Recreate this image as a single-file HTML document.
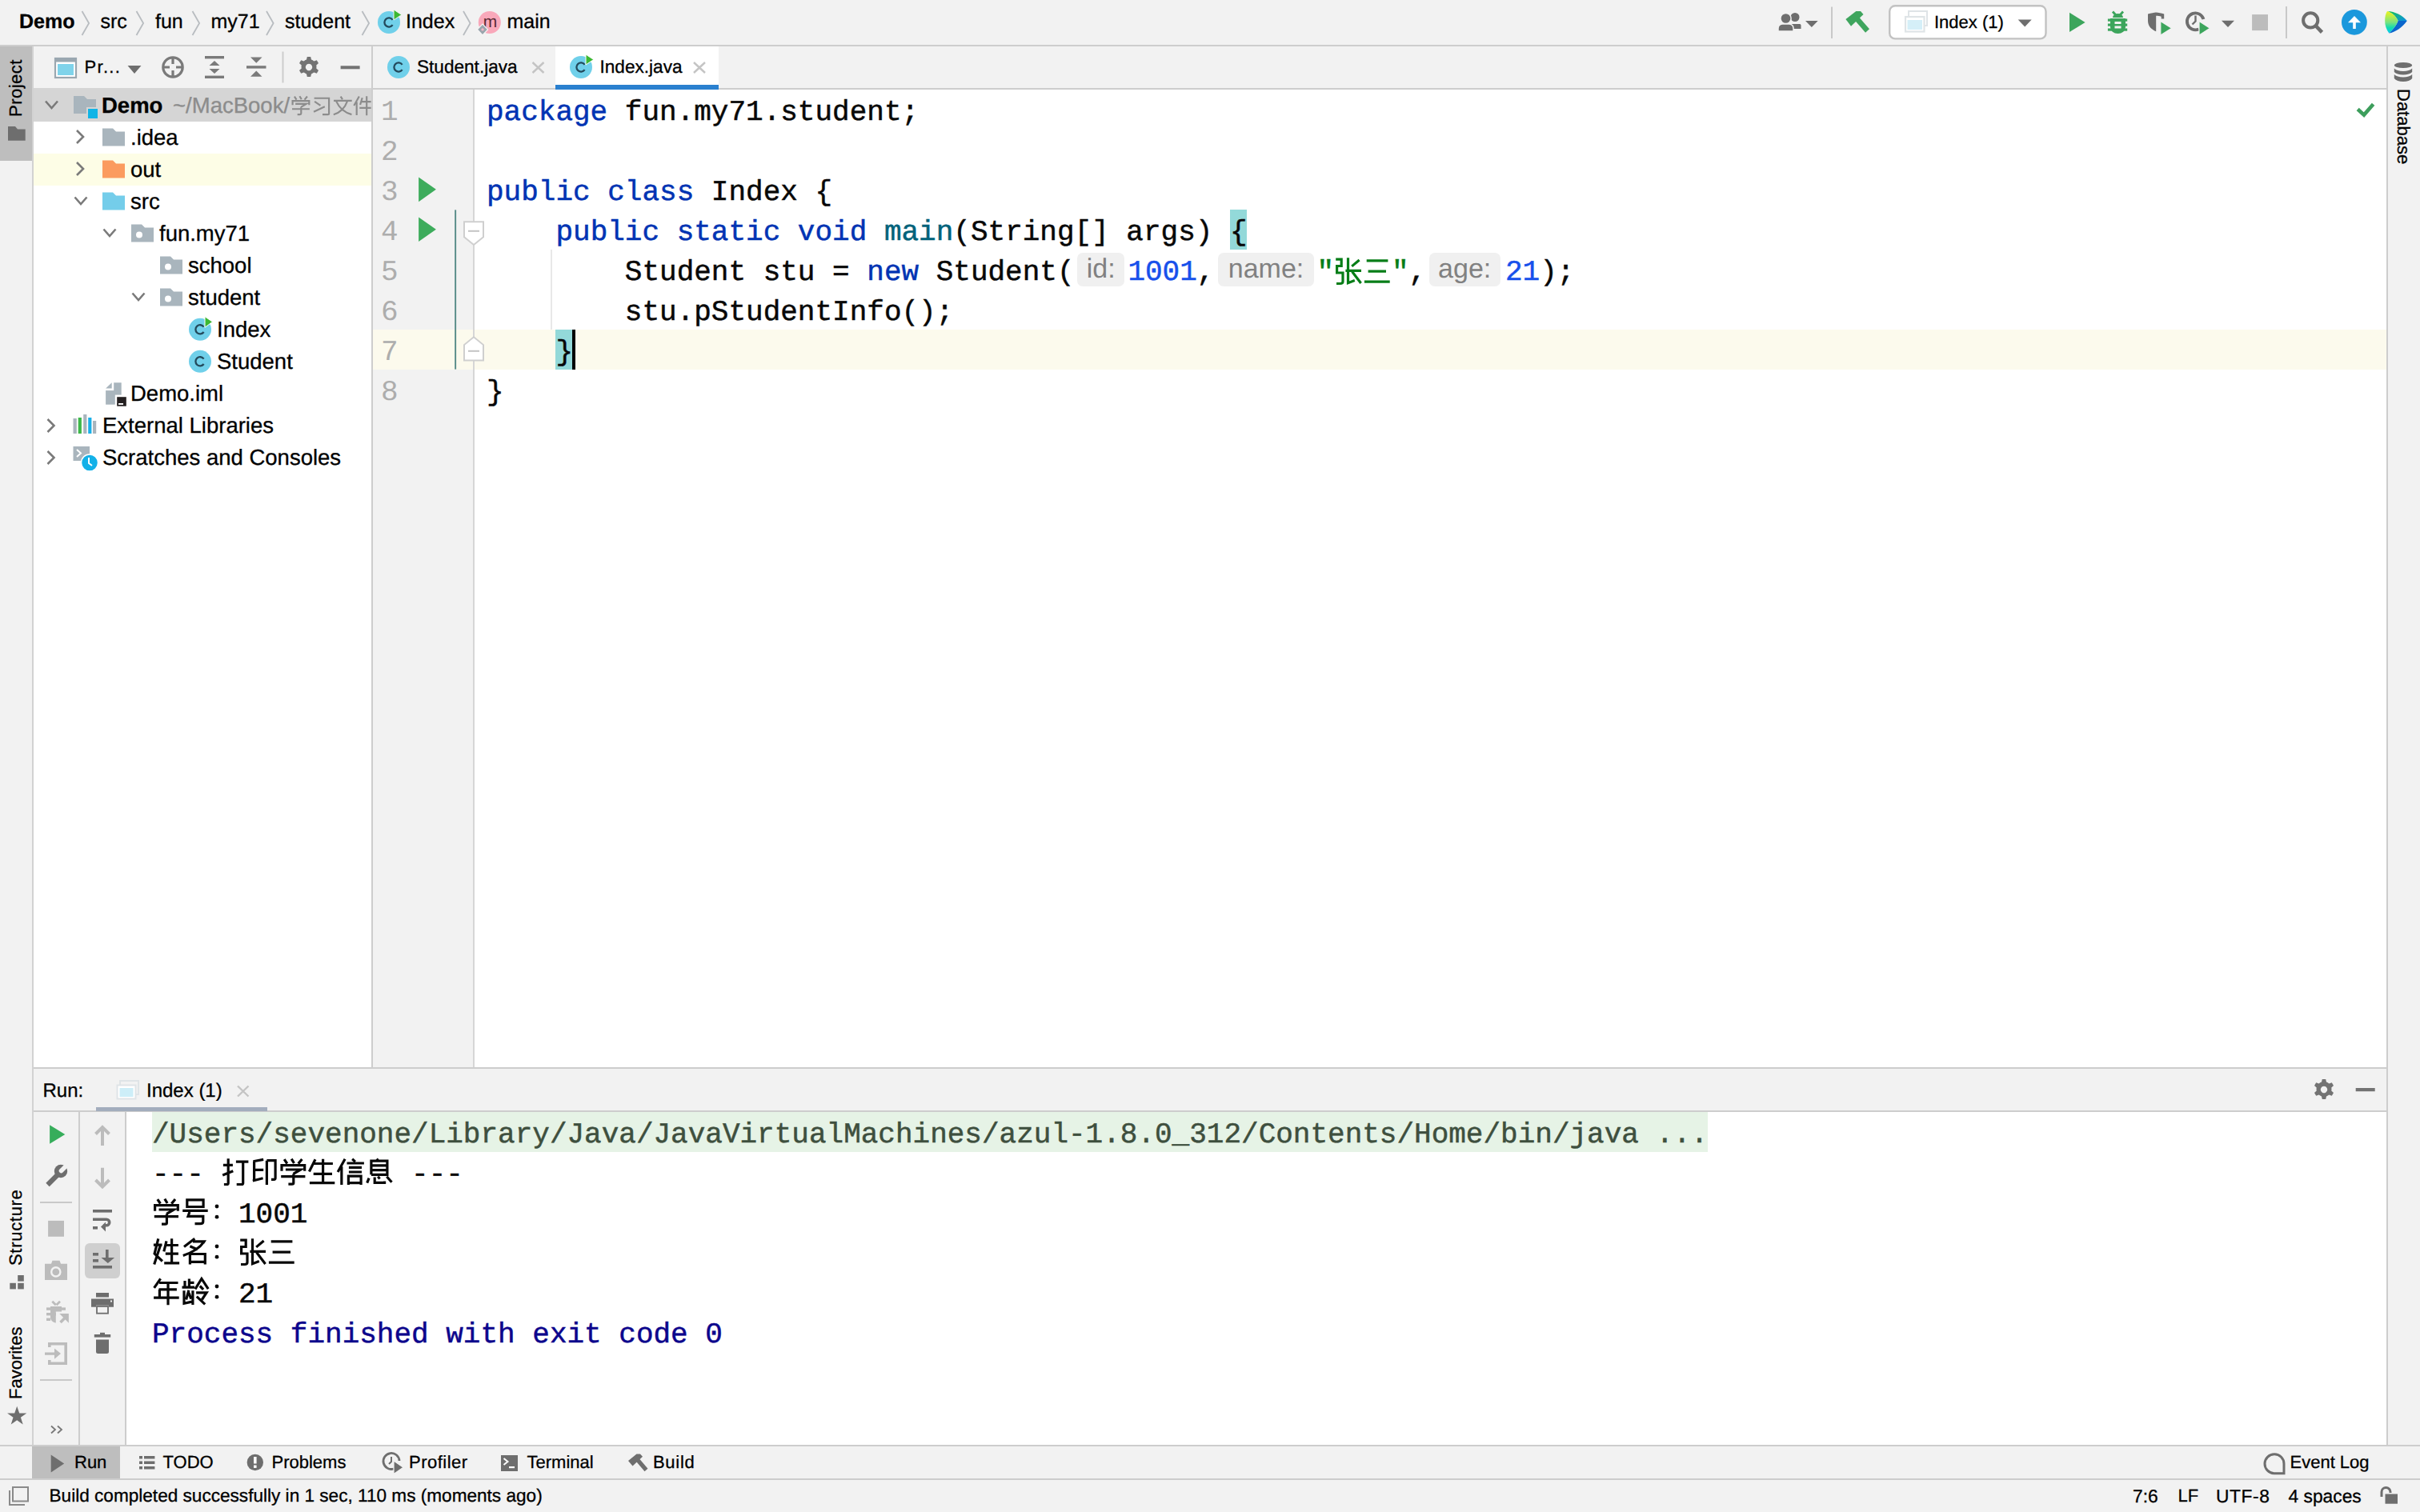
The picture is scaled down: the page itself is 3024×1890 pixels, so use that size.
<!DOCTYPE html>
<html><head><meta charset="utf-8">
<style>
*{margin:0;padding:0;box-sizing:border-box}
html,body{text-rendering:geometricPrecision;width:3024px;height:1890px;overflow:hidden;background:#f2f2f2;font-family:"Liberation Sans",sans-serif;color:#000}
.a{position:absolute}
.hb{position:absolute;background:#cdcdcd}
.t26{font-size:26px;line-height:40px;white-space:pre}
.t22{font-size:22px;line-height:40px;white-space:pre}
.mono{font-family:"Liberation Mono",monospace;font-size:36px;line-height:50px;white-space:pre;color:#080808;-webkit-text-stroke:0.5px currentColor}
.tr{font-size:27.5px;line-height:40px;white-space:pre;-webkit-text-stroke:0.3px currentColor}
.bc{font-size:25px;line-height:56px;white-space:pre;-webkit-text-stroke:0.3px currentColor}
.s22{font-size:22px;line-height:40px;white-space:pre;-webkit-text-stroke:0.3px currentColor}
.kw{color:#0033b3}.num{color:#1750eb}
.ln{font-family:"Liberation Mono",monospace;font-size:36px;line-height:50px;color:#adadad;white-space:pre}
.hint{height:41.2px;border-radius:7px;background:#f0f0f0;color:#818181;font-size:34px;line-height:41px;text-align:center;white-space:pre}
.cjk{display:inline-block;width:36px;text-align:center}
.vt{font-size:22px;line-height:22px;white-space:pre;transform-origin:0 0;-webkit-text-stroke:0.3px currentColor}
svg{position:absolute;overflow:visible}
</style></head><body>

<!-- ============ TOP NAV BAR ============ -->
<div class="a" id="topbar" style="left:0;top:0;width:3024px;height:56px;background:#f2f2f2"></div>
<div class="hb" style="left:0;top:56px;width:3024px;height:2px"></div>

<!-- ============ LEFT STRIPE ============ -->
<div class="a" style="left:0;top:58px;width:40px;height:143px;background:#bebebe"></div>
<div class="hb" style="left:40px;top:58px;width:2px;height:1748px;background:#d2d2d2"></div>

<!-- ============ PROJECT PANEL ============ -->
<div class="a" style="left:42px;top:110px;width:422px;height:1224px;background:#fff"></div>
<div class="hb" style="left:464px;top:58px;width:2px;height:1276px"></div>


<!-- TREE ROWS -->
<div class="a" style="left:42px;top:110px;width:422px;height:42px;background:#d5d5d5"></div>
<div class="a" style="left:42px;top:192px;width:422px;height:40px;background:#fdfde6"></div>
<div class="a" style="left:42px;top:110px;width:422px;height:520px;overflow:hidden">
 <div class="a tr" style="left:85px;top:2px;font-weight:bold">Demo<span style="font-weight:normal;color:#8c8c8c;margin-left:5px"> ~/MacBook/</span></div>
 <div class="a tr" style="left:121px;top:42px">.idea</div>
 <div class="a tr" style="left:121px;top:82px">out</div>
 <div class="a tr" style="left:121px;top:122px">src</div>
 <div class="a tr" style="left:157px;top:162px">fun.my71</div>
 <div class="a tr" style="left:193px;top:202px">school</div>
 <div class="a tr" style="left:193px;top:242px">student</div>
 <div class="a tr" style="left:229px;top:282px">Index</div>
 <div class="a tr" style="left:229px;top:322px">Student</div>
 <div class="a tr" style="left:121px;top:362px">Demo.iml</div>
 <div class="a tr" style="left:86px;top:402px">External Libraries</div>
 <div class="a tr" style="left:86px;top:442px">Scratches and Consoles</div>
</div>

<!-- ============ EDITOR ============ -->
<div class="hb" style="left:466px;top:110px;width:2516px;height:2px"></div>
<div class="a" style="left:466px;top:112px;width:125px;height:1222px;background:#f2f2f2"></div>
<div class="hb" style="left:591px;top:112px;width:2px;height:1222px;background:#d6d6d6"></div>
<div class="a" style="left:593px;top:112px;width:2389px;height:1222px;background:#fff"></div>


<!-- BREADCRUMBS -->
<div class="a bc" style="left:24px;top:-1px;font-weight:bold">Demo</div>
<div class="a bc" style="left:125.5px;top:-1px">src</div>
<div class="a bc" style="left:194px;top:-1px">fun</div>
<div class="a bc" style="left:263.5px;top:-1px">my71</div>
<div class="a bc" style="left:356px;top:-1px">student</div>
<div class="a bc" style="left:507px;top:-1px">Index</div>
<div class="a bc" style="left:633.5px;top:-1px">main</div>

<!-- PROJECT TOOLBAR -->
<div class="a s22" style="left:105.5px;top:64px;letter-spacing:1.3px">Pr...</div>

<!-- TABS -->
<div class="a" style="left:694px;top:58px;width:204px;height:52px;background:#fff"></div>
<div class="a" style="left:694px;top:106px;width:204px;height:6px;background:#2a80cf"></div>
<div class="a s22" style="left:521px;top:64px;font-size:22.6px">Student.java</div>
<div class="a s22" style="left:749.5px;top:64px;font-size:22.6px">Index.java</div>


<!-- CURRENT LINE (7) -->
<div class="a" style="left:466px;top:412px;width:2516px;height:50px;background:#fcfaed"></div>
<div class="hb" style="left:591px;top:412px;width:2px;height:50px;background:#d6d6d6"></div>
<!-- brace highlights -->
<div class="a" style="left:1536.5px;top:262px;width:21.6px;height:50px;background:#93d9d9"></div>
<div class="a" style="left:693.5px;top:412px;width:21.6px;height:50px;background:#93d9d9"></div>
<div class="a" style="left:714.5px;top:412px;width:4px;height:50px;background:#000"></div>
<!-- indent guide -->
<div class="a" style="left:688px;top:312px;width:2px;height:100px;background:#e8e8e8"></div>
<!-- LINE NUMBERS -->
<div class="a ln" style="left:476px;top:115.5px">1<br>2<br>3<br>4<br>5<br>6<br>7<br>8</div>
<!-- CODE -->
<div class="a mono" style="left:608px;top:115.5px"><span class="kw">package</span> fun.my71.student;</div>
<div class="a mono" style="left:608px;top:215.5px"><span class="kw">public class</span> Index {</div>
<div class="a mono" style="left:608px;top:265.5px">    <span class="kw">public static void</span> <span style="color:#00627a">main</span>(String[] args) {</div>
<div class="a mono" style="left:608px;top:315.5px">        Student stu = <span class="kw">new</span> Student(</div>
<div class="a hint" style="left:1346.4px;top:316.4px;width:58.6px">id:</div>
<div class="a mono" style="left:1409.4px;top:315.5px"><span class="num">1001</span>,</div>
<div class="a hint" style="left:1522.2px;top:316.4px;width:119.6px">name:</div>
<div class="a mono" style="left:1645.4px;top:315.5px;color:#067d17">"<span class="cjk"> </span><span class="cjk"> </span>"<span style="color:#080808">,</span></div>
<div class="a hint" style="left:1785.6px;top:316.4px;width:89.2px">age:</div>
<div class="a mono" style="left:1881px;top:315.5px"><span class="num">21</span>);</div>
<div class="a mono" style="left:608px;top:365.5px">        stu.pStudentInfo();</div>
<div class="a mono" style="left:608px;top:415.5px">    }</div>
<div class="a mono" style="left:608px;top:465.5px">}</div>

<!-- ============ RIGHT STRIPE ============ -->
<div class="hb" style="left:2982px;top:58px;width:2px;height:1748px"></div>

<!-- ============ RUN WINDOW ============ -->
<div class="hb" style="left:42px;top:1334px;width:2940px;height:2px"></div>
<div class="hb" style="left:42px;top:1388px;width:2940px;height:2px"></div>
<div class="hb" style="left:98px;top:1390px;width:2px;height:416px"></div>
<div class="hb" style="left:156px;top:1390px;width:2px;height:416px"></div>
<div class="a" style="left:158px;top:1390px;width:2824px;height:416px;background:#fff"></div>


<!-- RUN HEADER -->
<div class="a s22" style="left:53.5px;top:1343.7px;font-size:24px">Run:</div>
<div class="a s22" style="left:183px;top:1343.7px;font-size:24px">Index (1)</div>
<div class="a" style="left:120px;top:1384px;width:214px;height:5px;background:#a3adbd"></div>
<!-- CONSOLE -->
<div class="a" style="left:190px;top:1390px;width:1944px;height:50px;background:#e6f3e6"></div>
<div class="a mono" style="left:190px;top:1393.5px;color:#3e4f3e">/Users/sevenone/Library/Java/JavaVirtualMachines/azul-1.8.0_312/Contents/Home/bin/java ...</div>
<div class="a mono" style="left:190px;top:1443.5px">--- <span class="cjk"> </span><span class="cjk"> </span><span class="cjk"> </span><span class="cjk"> </span><span class="cjk"> </span><span class="cjk"> </span> ---</div>
<div class="a mono" style="left:190px;top:1493.5px"><span class="cjk"> </span><span class="cjk"> </span><span class="cjk"> </span>1001</div>
<div class="a mono" style="left:190px;top:1543.5px"><span class="cjk"> </span><span class="cjk"> </span><span class="cjk"> </span><span class="cjk"> </span><span class="cjk"> </span></div>
<div class="a mono" style="left:190px;top:1593.5px"><span class="cjk"> </span><span class="cjk"> </span><span class="cjk"> </span>21</div>
<div class="a mono" style="left:190px;top:1643.5px;color:#0c058c">Process finished with exit code 0</div>
<div class="a" style="left:106px;top:1554px;width:44px;height:44px;border-radius:6px;background:#cfcfcf"></div>
<!-- BOTTOM STRIPE -->
<div class="a" style="left:40px;top:1808px;width:110px;height:40px;background:#bebebe"></div>
<div class="a s22" style="left:93px;top:1808px">Run</div>
<div class="a s22" style="left:203.5px;top:1808px">TODO</div>
<div class="a s22" style="left:339.5px;top:1808px">Problems</div>
<div class="a s22" style="left:511px;top:1808px;letter-spacing:0.5px">Profiler</div>
<div class="a s22" style="left:658.5px;top:1808px">Terminal</div>
<div class="a s22" style="left:816px;top:1808px;letter-spacing:0.7px">Build</div>
<div class="a s22" style="left:2861.5px;top:1808px">Event Log</div>
<!-- STATUS BAR -->
<div class="a s22" style="left:61.5px;top:1850px;font-size:22.6px">Build completed successfully in 1 sec, 110 ms (moments ago)</div>
<div class="a s22" style="left:2665px;top:1850px;font-size:22.8px">7:6</div>
<div class="a s22" style="left:2721.5px;top:1850px">LF</div>
<div class="a s22" style="left:2769px;top:1850px;font-size:22.8px;letter-spacing:0.6px">UTF-8</div>
<div class="a s22" style="left:2859.5px;top:1850px;font-size:22.8px">4 spaces</div>

<!-- ============ BOTTOM STRIPE + STATUS ============ -->
<div class="hb" style="left:0;top:1806px;width:3024px;height:2px"></div>
<div class="hb" style="left:0;top:1848px;width:3024px;height:2px"></div>

<svg id="ov" style="left:0;top:0" width="3024" height="1890">
<polyline points="57,126.5 64.5,135 72,126.5" fill="none" stroke="#7a7a7a" stroke-width="2.6"/>
<path d="M92,120h13l4,4h11v18h-28z" fill="#a9b5bd"/>
<rect x="109" y="135" width="14" height="14" fill="#10b4e6" stroke="#d5d5d5" stroke-width="2"/>
<polyline points="96,163 104,171 96,179" fill="none" stroke="#7a7a7a" stroke-width="2.6"/>
<path d="M128,160.5h13l4,4h11v18h-28z" fill="#a9b5bd"/>
<polyline points="96,203 104,211 96,219" fill="none" stroke="#7a7a7a" stroke-width="2.6"/>
<path d="M128,200.5h13l4,4h11v18h-28z" fill="#fb9b5f"/>
<polyline points="93.5,246.5 101.0,255 108.5,246.5" fill="none" stroke="#7a7a7a" stroke-width="2.6"/>
<path d="M128,240.5h13l4,4h11v18h-28z" fill="#74cdea"/>
<polyline points="129.5,286.5 137.0,295 144.5,286.5" fill="none" stroke="#7a7a7a" stroke-width="2.6"/>
<path d="M164,280.5h13l4,4h11v18h-28z" fill="#a9b5bd"/><circle cx="174" cy="293.5" r="4" fill="#fff"/>
<path d="M200,320.5h13l4,4h11v18h-28z" fill="#a9b5bd"/><circle cx="210" cy="333.5" r="4" fill="#fff"/>
<polyline points="165.5,366.5 173.0,375 180.5,366.5" fill="none" stroke="#7a7a7a" stroke-width="2.6"/>
<path d="M200,360.5h13l4,4h11v18h-28z" fill="#a9b5bd"/><circle cx="210" cy="373.5" r="4" fill="#fff"/>
<circle cx="250" cy="411.8" r="14" fill="#70d0ea"/><path d="M254.6,408.6 A5.6,5.6 0 1 0 254.6,415.0" fill="none" stroke="#234a5c" stroke-width="2.3"/><path d="M256,395.8 L265.6,402.3 L256,409.3z" fill="#3cb832" stroke="#fff" stroke-width="1"/>
<circle cx="250" cy="451.8" r="14" fill="#70d0ea"/><path d="M254.6,448.6 A5.6,5.6 0 1 0 254.6,455.0" fill="none" stroke="#234a5c" stroke-width="2.3"/>
<g fill="#a9b5bd"><path d="M132.1,485.6l7.6,-7.3v7.3z"/><rect x="142.2" y="478.3" width="9.5" height="15.3"/><rect x="132.1" y="488.1" width="11.7" height="17.6"/></g><rect x="146.2" y="496.2" width="11.6" height="11.5" fill="#231f20"/><rect x="148" y="504" width="6" height="1.9" fill="#fff"/>
<polyline points="59.5,524 67.5,532 59.5,540" fill="none" stroke="#7a7a7a" stroke-width="2.6"/>
<rect x="91.5" y="523" width="4.3" height="19" fill="#a9b5bd"/><rect x="97.7" y="522" width="4.2" height="20" fill="#3db84a"/><rect x="104.2" y="518" width="4.2" height="24" fill="#a9b5bd"/><rect x="110.2" y="522" width="4.2" height="20" fill="#1ab0e8"/><rect x="116" y="526" width="4.2" height="16" fill="#a9b5bd"/>
<polyline points="59.5,564 67.5,572 59.5,580" fill="none" stroke="#7a7a7a" stroke-width="2.6"/>
<rect x="91.5" y="558" width="20.5" height="18" fill="#a9b5bd"/><polyline points="96,562 101,566.5 96,571" fill="none" stroke="#fff" stroke-width="2"/><circle cx="112" cy="578.5" r="10.5" fill="#13b1e8" stroke="#fff" stroke-width="1.5"/><polyline points="111,572 111,579 115,582" fill="none" stroke="#fff" stroke-width="2"/>
<polyline points="102.5,14 111.1,29 102.5,44" fill="none" stroke="#b8bcc0" stroke-width="1.8"/>
<polyline points="170.5,14 179.1,29 170.5,44" fill="none" stroke="#b8bcc0" stroke-width="1.8"/>
<polyline points="240.5,14 249.1,29 240.5,44" fill="none" stroke="#b8bcc0" stroke-width="1.8"/>
<polyline points="333,14 341.6,29 333,44" fill="none" stroke="#b8bcc0" stroke-width="1.8"/>
<polyline points="452.5,14 461.1,29 452.5,44" fill="none" stroke="#b8bcc0" stroke-width="1.8"/>
<polyline points="579,14 587.6,29 579,44" fill="none" stroke="#b8bcc0" stroke-width="1.8"/>
<circle cx="486" cy="28" r="14" fill="#70d0ea"/><path d="M490.6,24.8 A5.6,5.6 0 1 0 490.6,31.2" fill="none" stroke="#234a5c" stroke-width="2.3"/><path d="M492,12 L501.8,18.5 L492,25z" fill="#3cb832" stroke="#f2f2f2" stroke-width="1"/>
<circle cx="611.8" cy="28" r="14" fill="#f9a8ba"/><text x="612.5" y="33.8" font-family="Liberation Sans" font-size="21" text-anchor="middle" fill="#5a2a35">m</text><path d="M603,30l6.6,6.9l-6.6,6.9l-6.6,-6.9z" fill="#9aa5ad" stroke="#f7f7f7" stroke-width="1.2"/><circle cx="603" cy="36.9" r="1.7" fill="#f5b5c5"/>
<rect x="69" y="73" width="26" height="24" fill="#fff" stroke="#9aa7b0" stroke-width="2.2"/><rect x="68" y="72" width="28" height="5.5" fill="#9aa7b0"/><rect x="72" y="80" width="20" height="14" fill="#7fd3ea"/>
<path d="M159.5,82h17l-8.5,10z" fill="#6e6e6e"/>
<circle cx="216" cy="84" r="12.2" fill="none" stroke="#7a7a7a" stroke-width="3.2"/><path d="M216,72v8M216,88v8M204,84h8M220,84h8" stroke="#7a7a7a" stroke-width="3.2"/>
<rect x="256" y="70" width="24" height="3.4" fill="#7a7a7a"/><rect x="256" y="94.6" width="24" height="3.4" fill="#7a7a7a"/><path d="M261.5,82h13l-6.5,-6z M261.5,86h13l-6.5,6z" fill="#7a7a7a"/>
<rect x="308" y="82.2" width="24.5" height="3.4" fill="#7a7a7a"/><path d="M313,71.6h14.5l-7.25,7.2z M313,95.8h14.5l-7.25,-7.2z" fill="#7a7a7a"/>
<rect x="352.5" y="64.5" width="2" height="39" fill="#cdcdcd"/>
<g transform="translate(386,84) scale(1.0)"><path d="M-2.2,-13h4.4l0.8,3.6a10,10 0 0 1 3.3,1.9l3.5,-1.2l2.2,3.8l-2.7,2.5a10,10 0 0 1 0,3.8l2.7,2.5l-2.2,3.8l-3.5,-1.2a10,10 0 0 1 -3.3,1.9l-0.8,3.6h-4.4l-0.8,-3.6a10,10 0 0 1 -3.3,-1.9l-3.5,1.2l-2.2,-3.8l2.7,-2.5a10,10 0 0 1 0,-3.8l-2.7,-2.5l2.2,-3.8l3.5,1.2a10,10 0 0 1 3.3,-1.9z M0,-4.2a4.2,4.2 0 1 0 0.01,0z" fill="#737373" fill-rule="evenodd"/></g>
<rect x="425.6" y="82.3" width="24" height="4" fill="#737373"/>
<circle cx="498" cy="84" r="14" fill="#70d0ea"/><path d="M502.6,80.8 A5.6,5.6 0 1 0 502.6,87.2" fill="none" stroke="#234a5c" stroke-width="2.3"/>
<path d="M665.5,78l14,13M679.5,78l-14,13" stroke="#c4c4c4" stroke-width="2.4"/>
<circle cx="726" cy="84" r="14" fill="#70d0ea"/><path d="M730.6,80.8 A5.6,5.6 0 1 0 730.6,87.2" fill="none" stroke="#234a5c" stroke-width="2.3"/><path d="M732,68 L741.8,74.5 L732,81z" fill="#3cb832" stroke="#fff" stroke-width="1"/>
<path d="M867,78l14,13M881,78l-14,13" stroke="#c4c4c4" stroke-width="2.4"/>
<g fill="#6e6e6e"><circle cx="2243" cy="21.5" r="5.5"/><path d="M2236,30h13c1,0 1.5,1 1.5,2v4h-14.5z"/><circle cx="2231.5" cy="23" r="6.6" stroke="#f2f2f2" stroke-width="1.5"/><path d="M2222,39v-3.5c0,-3 2,-5 5,-5.5h9c3,0.5 5,2.5 5,5.5v3.5z" stroke="#f2f2f2" stroke-width="1.5"/></g>
<path d="M2256,26h15.7l-7.85,8z" fill="#6e6e6e"/>
<rect x="2288" y="8.5" width="2" height="39.5" fill="#c9c9c9"/>
<path d="M2320,23l13.5,15.5" stroke="#3fa55e" stroke-width="6.5"/><path d="M2306.4,24.1l12.9,-10l5.7,0l3.5,4l-15.5,14.7z" fill="#3fa55e"/>
<rect x="2361.2" y="7.2" width="195.3" height="41.2" rx="7" fill="#fff" stroke="#c2c2c2" stroke-width="2.4"/>
<rect x="2385" y="14" width="23" height="18" fill="none" stroke="#dfe4e7" stroke-width="2"/><rect x="2381" y="21" width="23.5" height="18.5" fill="#fff" stroke="#dfe4e7" stroke-width="2.2"/><rect x="2383.5" y="25" width="18.5" height="12" fill="#d5eff8"/>
<path d="M2521.7,24.5h17l-8.5,9z" fill="#6e6e6e"/>
<path d="M2586,15.8v24.3l19.6,-12.15z" fill="#3ca55c"/>
<g fill="#3ca55c"><path d="M2640,22a6.5,5 0 0 1 13,0z"/><path d="M2637,23h19v11a9.5,8 0 0 1 -19,0z"/><rect x="2633.9" y="23.5" width="24.3" height="3.2"/><rect x="2633.9" y="29.5" width="24.3" height="3.2"/><rect x="2633.9" y="35.5" width="24.3" height="3.2"/><path d="M2640,14.5l4,4.5M2653,14.5l-4,4.5" stroke="#3ca55c" stroke-width="2.8"/></g><rect x="2642.5" y="27" width="8" height="3" fill="#f2f2f2"/><rect x="2642.5" y="32.5" width="8" height="3" fill="#f2f2f2"/>
<path d="M2684,17.5c4,-1 8,-2 10,-2c3,0 7,1 10.2,2v6h-3.5v-2.8c-2,-0.6 -4,-0.9 -6.5,-0.9v19.5c-5,-2 -10,-6 -10.2,-13z" fill="#6e6e6e"/><path d="M2699.8,26.6v17.3l13.9,-8.65z" fill="#3ca55c" stroke="#f2f2f2" stroke-width="1.2"/>
<path d="M2753.5,24a10.5,10.5 0 1 0 -6,12.5" fill="none" stroke="#6e6e6e" stroke-width="3.8"/><path d="M2743.5,19.5v7l-4,4" fill="none" stroke="#6e6e6e" stroke-width="2.4"/><path d="M2748,26.6v17.3l13.5,-8.65z" fill="#3ca55c" stroke="#f2f2f2" stroke-width="1.2"/>
<path d="M2776,25.8h16l-8,8.1z" fill="#6e6e6e"/>
<rect x="2814.1" y="18.1" width="19.9" height="20" fill="#bcbcbc"/>
<rect x="2856" y="8" width="2" height="40" fill="#c9c9c9"/>
<circle cx="2887.2" cy="25.4" r="9.1" fill="none" stroke="#6e6e6e" stroke-width="4"/><path d="M2894,32.5l7.5,7.8" stroke="#6e6e6e" stroke-width="4.6"/>
<circle cx="2941.9" cy="27.8" r="15.9" fill="#1b98dc"/><path d="M2934,28.2h16l-8,-8.2z" fill="#fff"/><rect x="2940.2" y="27.5" width="3.6" height="8.5" fill="#fff"/>
<defs><linearGradient id="jb1" x1="0" y1="0" x2="0" y2="1"><stop offset="0" stop-color="#eef51c"/><stop offset="0.5" stop-color="#7ae27e"/><stop offset="0.75" stop-color="#10dcb0"/><stop offset="1" stop-color="#07c8f0"/></linearGradient><linearGradient id="jb2" x1="0" y1="0" x2="1" y2="1"><stop offset="0" stop-color="#18c84a"/><stop offset="1" stop-color="#0a8ee6"/></linearGradient></defs>
<path d="M2983,14C2993,14.5 3002,19 3007.8,26H2996.5C2994,20 2989,16 2983,14Z" fill="url(#jb2)"/><path d="M3007.8,26C3002,34 2993,40.5 2985.3,41.6C2990,37 2995,31 2996.5,26Z" fill="#0b66cc"/><path d="M2983,14C2989,16 2994,20 2996.5,26C2995,31 2990,37 2985.3,41.6C2982,37 2980,31 2980.2,26C2980.2,21 2981,17 2983,14Z" fill="url(#jb1)"/>
<path d="M10,158h9l3,3.5h9.7v14.3h-21.7z" fill="#6e6e6e"/>
<rect x="22.2" y="1594" width="7.6" height="7.6" fill="#6e6e6e"/><rect x="12.3" y="1603.8" width="7.6" height="7.6" fill="#6e6e6e"/><rect x="22.2" y="1603.8" width="7.6" height="7.6" fill="#6e6e6e"/>
<path d="M21.2,1757.8l3,8.6h9.1l-7.4,5.4l2.8,8.8l-7.5,-5.4l-7.5,5.4l2.8,-8.8l-7.4,-5.4h9.1z" fill="#6e6e6e"/>
<g fill="#6e6e6e"><ellipse cx="3003" cy="81.5" rx="11.2" ry="3.6"/><path d="M2991.8,85.5c2,2.2 6,3.4 11.2,3.4s9.2,-1.2 11.2,-3.4v4.5c-2,2.2 -6,3.4 -11.2,3.4s-9.2,-1.2 -11.2,-3.4z"/><path d="M2991.8,93c2,2.2 6,3.4 11.2,3.4s9.2,-1.2 11.2,-3.4v5c-2,2.4 -6,4 -11.2,4s-9.2,-1.6 -11.2,-4z"/></g>
<path d="M523.1,221.5v30.7l21.8,-15.35z" fill="#3dac5c"/><path d="M523.1,271.5v30.6l21.8,-15.3z" fill="#3dac5c"/>
<rect x="568.2" y="262.4" width="1.9" height="199.2" fill="#558a87"/>
<path d="M580,277.2h24v19l-12,9.8l-12,-9.8z" fill="#fff" stroke="#cfcfcf" stroke-width="2"/><rect x="585" y="287.8" width="14" height="2" fill="#c4c4c4"/>
<path d="M580,450.5h24v-19.4l-12,-9.8l-12,9.8z" fill="#fff" stroke="#cfcfcf" stroke-width="2"/><rect x="585" y="437.8" width="14" height="2" fill="#c4c4c4"/>
<polyline points="2946.2,136.5 2954,143.6 2965.6,130.3" fill="none" stroke="#3d9e5c" stroke-width="4.6"/>
<rect x="150" y="1351" width="23" height="17" fill="none" stroke="#dfe4e7" stroke-width="2"/><rect x="146.5" y="1356.5" width="23" height="17" fill="#fff" stroke="#dfe4e7" stroke-width="2"/><rect x="149.5" y="1360" width="17" height="11" fill="#cdeef8"/>
<path d="M297,1357.5l13.5,13M310.5,1357.5l-13.5,13" stroke="#c4c4c4" stroke-width="2.4"/>

<g transform="translate(2904,1362)"><path d="M-2.2,-13h4.4l0.8,3.6a10,10 0 0 1 3.3,1.9l3.5,-1.2l2.2,3.8l-2.7,2.5a10,10 0 0 1 0,3.8l2.7,2.5l-2.2,3.8l-3.5,-1.2a10,10 0 0 1 -3.3,1.9l-0.8,3.6h-4.4l-0.8,-3.6a10,10 0 0 1 -3.3,-1.9l-3.5,1.2l-2.2,-3.8l2.7,-2.5a10,10 0 0 1 0,-3.8l-2.7,-2.5l2.2,-3.8l3.5,1.2a10,10 0 0 1 3.3,-1.9z M0,-4.2a4.2,4.2 0 1 0 0.01,0z" fill="#737373" fill-rule="evenodd"/></g>
<rect x="2943.7" y="1360" width="24" height="4.2" fill="#737373"/>
<path d="M62.1,1406.3v23.4l19.2,-11.7z" fill="#36ad5b"/>
<path d="M59.5,1481l15,-15" stroke="#6e6e6e" stroke-width="6.2"/><circle cx="76" cy="1464" r="8.2" fill="#6e6e6e"/><path d="M76.5,1463.5l9,-9" stroke="#f2f2f2" stroke-width="5.6" stroke-linecap="round"/>
<rect x="50" y="1502" width="40" height="2" fill="#c9c9c9"/>
<rect x="60.1" y="1525.9" width="19.9" height="19.9" fill="#bcbcbc"/>
<path d="M56,1579.7h8l1.5,-4h9l1.5,4h8v20.3h-28z" fill="#bcbcbc"/><circle cx="69.8" cy="1589.9" r="5.6" fill="none" stroke="#f2f2f2" stroke-width="2.4"/>
<g fill="#bcbcbc"><path d="M65.3,1626.8l4.5,4.5M75,1626.8l-4.5,4.5" stroke="#bcbcbc" stroke-width="2.8"/><path d="M63,1633h14v6.5h-7.2v14c-4,-0.5 -6.8,-3 -6.8,-7z"/><rect x="58" y="1634.4" width="24" height="3.4"/><rect x="58" y="1641" width="12" height="3.4"/><rect x="58" y="1647.6" width="5" height="3.4"/><path d="M75.5,1653l8,-8" stroke="#bcbcbc" stroke-width="3.6"/><path d="M74.3,1642h11.6v11.8z"/></g>
<path d="M60,1684v-6h24v28h-24v-6h3.6v2.4h16.8v-20.8h-16.8v2.4z" fill="#bcbcbc"/><path d="M56,1690.5h12v-5l8,6.6l-8,6.6v-5h-12z" fill="#bcbcbc"/>
<rect x="50" y="1724" width="40" height="2" fill="#c9c9c9"/>
<path d="M64,1782.5l5,4.5l-5,4.5M72,1782.5l5,4.5l-5,4.5" fill="none" stroke="#777" stroke-width="1.8"/>
<path d="M128,1409v22.9M119.5,1417.5l8.5,-8.5l8.5,8.5" fill="none" stroke="#bcbcbc" stroke-width="4"/>
<path d="M128,1459.8v23M119.5,1475l8.5,8.5l8.5,-8.5" fill="none" stroke="#bcbcbc" stroke-width="4"/>
<g fill="#6e6e6e"><rect x="116" y="1512" width="24" height="3.6"/><rect x="116" y="1533" width="6" height="3.6"/><path d="M116,1522.5h17a5.5,5.5 0 0 1 0,11h-4v-3.6h4a1.9,1.9 0 0 0 0,-3.8h-17z"/><path d="M132,1527.5v12l-6,-6z"/></g>
<g fill="#6e6e6e"><rect x="116" y="1566" width="7" height="3.6"/><rect x="116" y="1574" width="7" height="3.6"/><rect x="116" y="1582" width="24" height="3.6"/><rect x="132" y="1562" width="3.6" height="11"/><path d="M126.5,1572h16.6l-8.3,7z"/></g>
<g fill="#6e6e6e"><rect x="120" y="1616" width="16" height="5.5"/><path d="M114,1623.6h28v10.2h-6v-2h-16v2h-6z"/><rect x="121" y="1633" width="14" height="8.7" fill="none" stroke="#6e6e6e" stroke-width="1.8"/></g><rect x="138" y="1625.5" width="2" height="2" fill="#f2f2f2"/>
<g fill="#6e6e6e"><rect x="117.8" y="1668" width="20.4" height="3.6"/><rect x="125" y="1665.8" width="6" height="3"/><path d="M120,1674.5h16v15a2.5,2.5 0 0 1 -2.5,2.5h-11a2.5,2.5 0 0 1 -2.5,-2.5z"/></g>
<path d="M63.7,1818.5v22l16.5,-11z" fill="#6e6e6e"/>
<g fill="#6e6e6e"><rect x="174" y="1820" width="4" height="3.5"/><rect x="180" y="1820" width="13.4" height="3.5"/><rect x="174" y="1826.5" width="4" height="3.5"/><rect x="180" y="1826.5" width="13.4" height="3.5"/><rect x="174" y="1833" width="4" height="3.5"/><rect x="180" y="1833" width="13.4" height="3.5"/></g>
<circle cx="318.8" cy="1828" r="10.2" fill="#6e6e6e"/><rect x="317" y="1821" width="3.6" height="8.5" fill="#fff"/><rect x="317" y="1831.5" width="3.6" height="3.4" fill="#fff"/>
<path d="M499,1826a10,10 0 1 0 -7,10" fill="none" stroke="#6e6e6e" stroke-width="2.8"/><path d="M489,1821v6l-3,3" fill="none" stroke="#6e6e6e" stroke-width="2"/><path d="M492,1826v16.5l12,-8.25z" fill="#6e6e6e" stroke="#f2f2f2" stroke-width="1.2"/>
<rect x="626" y="1819" width="21" height="20" fill="#6e6e6e"/><path d="M629.5,1823l5,4l-5,4" fill="none" stroke="#fff" stroke-width="2"/><rect x="636" y="1833" width="7" height="2.2" fill="#fff"/>
<path d="M796,1824l11.5,13.5" stroke="#6e6e6e" stroke-width="5.2"/><path d="M785,1826l10.5,-8.5l4.5,0l3,3.2l-12.5,11.8z" fill="#6e6e6e"/>
<path d="M2854,1841.7h-12.5a12,12 0 1 1 12.5,-12z" fill="none" stroke="#6e6e6e" stroke-width="3"/>
<rect x="16" y="1859" width="19" height="17.5" fill="none" stroke="#8a8a8a" stroke-width="2"/><path d="M12,1863v18h19" fill="none" stroke="#8a8a8a" stroke-width="2"/>
<path d="M2976,1871v-6a5.5,5.5 0 0 1 11,0v1" fill="none" stroke="#6e6e6e" stroke-width="3"/><rect x="2980.5" y="1867.5" width="15.5" height="12.2" fill="#6e6e6e"/>
<!-- CJK GLYPHS -->
<path transform="translate(276.40,1446.00) scale(1.0000)" d="M2.5,10.4H14.5 M8.8,2.3V33Q8.8,34.5 7,34.5H3.5 M1.8,22.9L14.9,17.7 M18.5,6.2H34 M27.3,6.2V33Q27.3,34.5 25.5,34.5H19.3" fill="none" stroke="#080808" stroke-width="3.2"/>
<path transform="translate(312.40,1446.00) scale(1.0000)" d="M4,5.7L16.8,3.4 M5.2,5.7V29.5 M5.2,16.4H16.8 M3.4,30L16.2,26.8 M21,4.7V35.1 M21,4.7H31.7V26.5Q31.7,28.3 29.9,28.3H26.6" fill="none" stroke="#080808" stroke-width="3.2"/>
<path transform="translate(348.40,1446.00) scale(1.0000)" d="M6.8,3.1L10.4,8.5 M15.8,2.6L19.1,8 M29,3L24.3,8.6 M3.6,17.7V10.6H32.3V17.7 M8.5,16H27.3L18.1,21.4 M18.4,21.4V32.5Q18.4,34.2 16.5,34.2H12 M2.8,24.7H33" fill="none" stroke="#080808" stroke-width="3.2"/>
<path transform="translate(384.40,1446.00) scale(1.0000)" d="M9.6,3.3L2,18.5 M6.3,8.5H31.5 M19.2,2.8V32.7 M7.3,21.4H30.6 M2.5,32.7H33.9" fill="none" stroke="#080808" stroke-width="3.2"/>
<path transform="translate(420.40,1446.00) scale(1.0000)" d="M10.7,2.8L1.7,19 M6.45,12.3V35.1 M19.75,2.8L23.5,6.1 M13.1,8H34.5 M15.5,13.3H31.6 M15.5,19H31.6 M15,35.1V24.2H30.7V35.1 M15,32.7H30.7" fill="none" stroke="#080808" stroke-width="3.2"/>
<path transform="translate(456.40,1446.00) scale(1.0000)" d="M16.5,2.8L14.2,4.7 M7.5,22.3V5.2H27.5V22.3H7.5 M7.5,10.9H27.5 M7.5,16.6H27.5 M4.7,26.6L2.3,32.7 M11.8,25.6V32.3H24.2V30.5 M15.8,24.7L18.2,27.5 M26.9,24.7L33.1,31.8" fill="none" stroke="#080808" stroke-width="3.2"/>
<path transform="translate(190.00,1496.00) scale(1.0000)" d="M6.8,3.1L10.4,8.5 M15.8,2.6L19.1,8 M29,3L24.3,8.6 M3.6,17.7V10.6H32.3V17.7 M8.5,16H27.3L18.1,21.4 M18.4,21.4V32.5Q18.4,34.2 16.5,34.2H12 M2.8,24.7H33" fill="none" stroke="#080808" stroke-width="3.2"/>
<path transform="translate(226.00,1496.00) scale(1.0000)" d="M7.8,3.8H28.1V12.5H7.8Z M2.2,17.4H33.7 M10.9,19L9,24.3H27.8V31Q27.8,33.7 24,33.7H17.5" fill="none" stroke="#080808" stroke-width="3.2"/>
<g transform="translate(262.00,1496.00) scale(1.0000)" fill="#080808"><circle cx="9" cy="12" r="2.4"/><circle cx="9" cy="25.2" r="2.4"/></g>
<path transform="translate(190.00,1546.00) scale(1.0000)" d="M7.8,2.3L3.1,21.1L12.9,30.5 M1.9,10.1H12.5 M10.5,10.5L2.7,34.5 M18,5.4L14.8,18.4 M16.4,10.5H32.9 M24.6,2.3V33.3 M16.8,21.1H32.9 M15.2,32.9H34.1" fill="none" stroke="#080808" stroke-width="3.2"/>
<path transform="translate(226.00,1546.00) scale(1.0000)" d="M17.3,2.3L4,12.5 M15,5.8H29.1Q22,17 2.8,23.5 M11.4,11.7L20.8,16 M11.4,34.5V21.5H30.3V34.5 M11.4,31.3H30.3" fill="none" stroke="#080808" stroke-width="3.2"/>
<g transform="translate(262.00,1546.00) scale(1.0000)" fill="#080808"><circle cx="9" cy="12" r="2.4"/><circle cx="9" cy="25.2" r="2.4"/></g>
<path transform="translate(298.00,1546.00) scale(1.0000)" d="M2.2,4.2H9.2V12.5H3.6V21H11V32Q11,34.5 7.5,34.5H3 M17.5,2.3V33.7L25.8,30.5 M31.6,5L22.2,12.9 M14.4,18.4H34 M22.6,19.5L33.6,34" fill="none" stroke="#080808" stroke-width="3.2"/>
<path transform="translate(334.00,1546.00) scale(1.0000)" d="M4.7,5.8H31.4 M6.6,19.2H29 M1.9,32.1H33.7" fill="none" stroke="#080808" stroke-width="3.2"/>
<path transform="translate(190.00,1596.00) scale(1.0000)" d="M10.6,2.4L2.6,13.9 M9,7.5H32.5 M8.5,15.8H30.9 M9.4,15.8V25.9 M2.1,26.1H33.7 M20,7.5V35.3" fill="none" stroke="#080808" stroke-width="3.2"/>
<path transform="translate(226.00,1596.00) scale(1.0000)" d="M10.4,2.4V12.7 M10.4,7.3H16.5 M5,5V12.7 M1.5,13.2H17 M4,17.2V33.2L13.7,31.1 M14.9,17.2V35.1 M9.9,16.7L6.6,28.5 M10,20L12.8,27.6 M17.9,15.3L25.9,2.4L34.2,15.1 M23.8,11.5L28.1,15.8 M19.1,19.8H32.1L26.4,28.5 M19.8,24.7L30.2,34.4" fill="none" stroke="#080808" stroke-width="3.2"/>
<g transform="translate(262.00,1596.00) scale(1.0000)" fill="#080808"><circle cx="9" cy="12" r="2.4"/><circle cx="9" cy="25.2" r="2.4"/></g>
<path transform="translate(1667.00,320.00) scale(1.0000)" d="M2.2,4.2H9.2V12.5H3.6V21H11V32Q11,34.5 7.5,34.5H3 M17.5,2.3V33.7L25.8,30.5 M31.6,5L22.2,12.9 M14.4,18.4H34 M22.6,19.5L33.6,34" fill="none" stroke="#067d17" stroke-width="3.2"/>
<path transform="translate(1703.00,320.00) scale(1.0000)" d="M4.7,5.8H31.4 M6.6,19.2H29 M1.9,32.1H33.7" fill="none" stroke="#067d17" stroke-width="3.2"/>
<path transform="translate(363.00,118.40) scale(0.7222)" d="M6.8,3.1L10.4,8.5 M15.8,2.6L19.1,8 M29,3L24.3,8.6 M3.6,17.7V10.6H32.3V17.7 M8.5,16H27.3L18.1,21.4 M18.4,21.4V32.5Q18.4,34.2 16.5,34.2H12 M2.8,24.7H33" fill="none" stroke="#8c8c8c" stroke-width="3.0"/>
<path transform="translate(389.00,118.40) scale(0.7222)" d="M5,6H30.6V33Q30.6,34.3 29,34.3H19.4 M5.7,11.6L15.8,18.8 M4.2,29.7L23.3,20.6" fill="none" stroke="#8c8c8c" stroke-width="3.0"/>
<path transform="translate(415.00,118.40) scale(0.7222)" d="M14.7,3L18,7.8 M2.8,10.3H34.2 M26.2,11.4Q20,29 2.5,34.4 M7.2,11.4Q15,29 33.8,34.2" fill="none" stroke="#8c8c8c" stroke-width="3.0"/>
<path transform="translate(441.00,118.40) scale(0.7222)" d="M10.8,3L1.8,18.8 M6.5,12.7V35.4 M16.2,5.3L12.6,17.5 M14.8,12H31.3 M11.5,22.9H31.3 M23.8,2.6V35.9" fill="none" stroke="#8c8c8c" stroke-width="3.0"/>
</svg>
<!-- TOP LAYER TEXT -->
<!-- STRIPE TEXTS -->
<div class="a vt" style="left:9.3px;top:145.5px;transform:rotate(-90deg);letter-spacing:0.5px">Project</div>
<div class="a vt" style="left:9.3px;top:1581.5px;transform:rotate(-90deg);letter-spacing:0.7px">Structure</div>
<div class="a vt" style="left:9.3px;top:1749px;transform:rotate(-90deg)">Favorites</div>
<div class="a vt" style="left:3013.7px;top:111px;transform:rotate(90deg)">Database</div>

<div class="a s22" style="left:2417px;top:8px">Index (1)</div>
</body></html>
